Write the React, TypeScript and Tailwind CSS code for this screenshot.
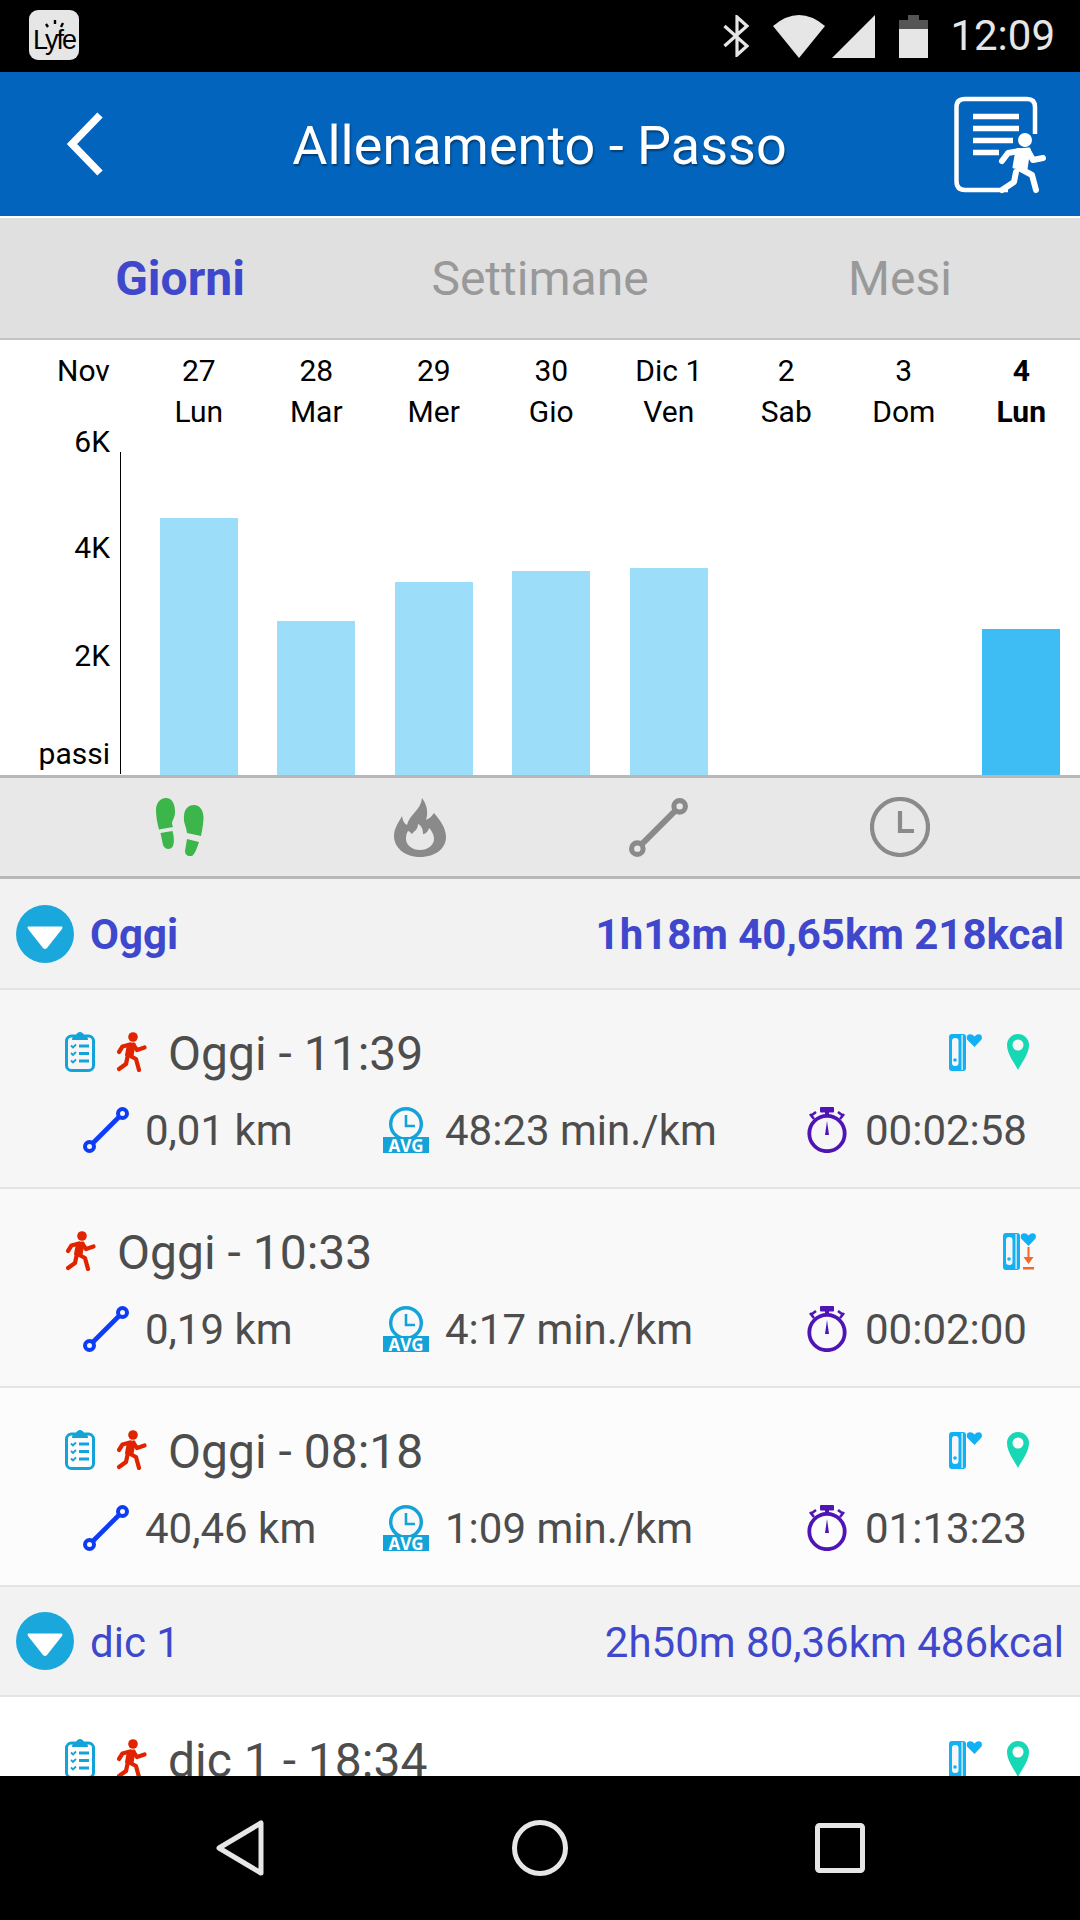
import React from 'react';

const days = [
  { top: '27', bottom: 'Lun', bar: 257 },
  { top: '28', bottom: 'Mar', bar: 154 },
  { top: '29', bottom: 'Mer', bar: 193 },
  { top: '30', bottom: 'Gio', bar: 204 },
  { top: 'Dic 1', bottom: 'Ven', bar: 207 },
  { top: '2', bottom: 'Sab', bar: 0 },
  { top: '3', bottom: 'Dom', bar: 0 },
  { top: '4', bottom: 'Lun', bar: 146, today: true },
];

const Runner = ({ color = '#e02400', className = 'w-[31px] h-[40px]' }: { color?: string; className?: string }) => (
  <svg viewBox="0 0 31 40" className={className}>
    <circle cx="17" cy="5" r="4.800" fill={color} />
    <path d="M12.500 12.500 L18 12 L16 24 L10.500 23 Z" fill={color} stroke={color} strokeWidth="3" strokeLinejoin="round" />
    <g fill="none" stroke={color} strokeWidth="4.200" strokeLinecap="round" strokeLinejoin="round">
      <path d="M14 12.500 L6.500 14.500 L3 20" />
      <path d="M17.500 13 L21 18 L28.500 15.500" />
      <path d="M12.500 23 L20 27 L23 38" />
      <path d="M11.500 25 L10 32 L3 37" />
    </g>
  </svg>
);

const Clipboard = () => (
  <svg viewBox="0 0 30 40" className="w-[30px] h-[40px]">
    <rect x="1.500" y="4" width="27" height="34.500" rx="5" fill="none" stroke="#14a3d9" strokeWidth="3" />
    <path d="M7 8 Q7 4 10.500 4 Q12 0 15 0 Q18 0 19.500 4 Q23 4 23 8 Z" fill="#14a3d9" />
    <g stroke="#14a3d9" fill="none">
      <path d="M14 14 H24 M14 21.500 H24 M14 29 H24" strokeWidth="3" />
      <path d="M6 13.500 L8 15.500 L11 12.500 M6 21 L8 23 L11 20 M6 28.500 L8 30.500 L11 27.500" strokeWidth="1.800" />
    </g>
  </svg>
);

const Distance = ({ color = '#0d3cf5', width = 4.6, className = 'w-[46px] h-[46px]' }: { color?: string; width?: number; className?: string }) => (
  <svg viewBox="0 0 46 46" className={className}>
    <path d="M10 36 L36 10" stroke={color} strokeWidth={width} />
    <circle cx="6.500" cy="39.500" r="4.500" fill="none" stroke={color} strokeWidth={width - 0.6} />
    <circle cx="39.500" cy="6.500" r="4.500" fill="none" stroke={color} strokeWidth={width - 0.6} />
  </svg>
);

const AvgPace = () => (
  <div className="relative w-[46px] h-[46px]">
    <svg viewBox="0 0 46 46" className="w-[46px] h-[46px]">
      <circle cx="23" cy="17" r="15.300" fill="#f8f8f8" stroke="#14a3d9" strokeWidth="3.400" />
      <path d="M23 8 V19 H32" fill="none" stroke="#14a3d9" strokeWidth="2.600" />
      <rect x="0" y="30" width="46" height="16" fill="#14a3d9" />
    </svg>
    <span className="absolute left-0 right-0 bottom-0 h-[16px] text-center text-white text-[17px] leading-[17px] font-bold font-['Open_Sans']">AVG</span>
  </div>
);

const Stopwatch = () => (
  <svg viewBox="0 0 40 46" className="w-[40px] h-[46px]">
    <circle cx="20" cy="26.500" r="17.700" fill="none" stroke="#4f14b4" strokeWidth="3.800" />
    <rect x="13" y="0" width="14" height="5.500" rx="1" fill="#4f14b4" />
    <rect x="18" y="4" width="4" height="6" fill="#4f14b4" />
    <path d="M5 8 L9 5 M35 8 L31 5 M3 7 L7 12 M37 7 L33 12" stroke="#4f14b4" strokeWidth="2.600" />
    <path d="M20 14 L22 28 H18 Z" fill="#4f14b4" />
  </svg>
);

const Band = ({ download }: { download?: boolean }) => (
  <svg viewBox="0 0 33 37" className="w-[33px] h-[37px]">
    <rect x="0" y="0" width="17" height="37" rx="3" fill="#12b0f5" />
    <rect x="3" y="4" width="6.500" height="28" rx="3" fill="#f7f7f7" />
    <rect x="12.500" y="1" width="1.200" height="35" fill="#f7f7f7" />
    <circle cx="6" cy="26" r="1.800" fill="#12b0f5" />
    <path d="M25.500 13 L18 5.500 Q17 1 20.500 0.300 Q23.500 0 25.500 2.500 Q27.500 0 30.500 0.300 Q34 1 32.500 5.500 Z" fill="#12b0f5" />
    {download && (
      <g fill="#f4662a">
        <rect x="24.500" y="14" width="2" height="12" />
        <path d="M20.500 24 H30.500 L25.500 31 Z" />
        <rect x="20" y="34" width="11" height="2.500" />
      </g>
    )}
  </svg>
);

const Pin = () => (
  <svg viewBox="0 0 22 36" className="w-[22px] h-[36px]">
    <path fillRule="evenodd" d="M11 36 C7 28 0 20 0 11 A11 11 0 0 1 22 11 C22 20 15 28 11 36 Z M11 5.500 A5.500 5.500 0 1 0 11 16.500 A5.500 5.500 0 1 0 11 5.500 Z" fill="#17d8b4" />
  </svg>
);

const GroupHeader = ({ label, summary, bold, height }: { label: string; summary: string; bold?: boolean; height: string }) => (
  <div className={`flex items-center justify-between bg-[#f2f2f2] border-b-2 border-[#e4e4e4] pl-[16px] pr-[16px] text-[42px] text-[#3f48cc] ${height} ${bold ? 'font-bold' : ''}`}>
    <div className="flex items-center gap-[16px]">
      <svg viewBox="0 0 58 58" className="w-[58px] h-[58px]">
        <circle cx="29" cy="29" r="29" fill="#1aa7dc" />
        <path d="M12 21.500 H46 Q47 22 46 24 L31 43 Q29 45 27 43 L12 24 Q11 22 12 21.500 Z" fill="#fff" />
      </svg>
      <span className="mt-[2px]">{label}</span>
    </div>
    <span className="mt-[2px]">{summary}</span>
  </div>
);

const Workout = ({ title, dist, pace, time, plan, gps, download, bg }: {
  title: string; dist?: string; pace?: string; time?: string; plan?: boolean; gps?: boolean; download?: boolean; bg: string;
}) => (
  <div className={`h-[199px] border-b-2 border-[#e4e4e4] pt-[42px] pl-[65px] pr-[51px] text-[#4d4d4d] ${bg}`}>
    <div className="flex items-center h-[40px]">
      {plan && <div className="mr-[21px] flex"><Clipboard /></div>}
      <Runner />
      <span className="ml-[21px] mt-[3px] text-[48px] leading-[44px]">{title}</span>
      <div className={`ml-auto flex items-center gap-[25px] ${download ? '-mr-[7px]' : ''}`}>
        <Band download={download} />
        {gps && <Pin />}
      </div>
    </div>
    {dist && (
      <div className="grid grid-cols-[300px_424px_1fr] mt-[33px] ml-[18px] text-[42px] leading-[46px]">
        <div className="flex items-center gap-[16px]"><Distance /><span className="mt-[3px]">{dist}</span></div>
        <div className="flex items-center gap-[16px]"><AvgPace /><span className="mt-[3px]">{pace}</span></div>
        <div className="flex items-center gap-[18px]"><Stopwatch /><span className="mt-[3px]">{time}</span></div>
      </div>
    )}
  </div>
);

export default function App() {
  return (
    <div className="w-[1080px] h-[1920px] flex flex-col overflow-hidden bg-white font-['Roboto',sans-serif]">
      {/* status bar */}
      <div className="h-[72px] shrink-0 bg-black flex items-center pl-[29px] pr-[25px] text-[#e6e6e6]">
        <div className="relative w-[50px] h-[50px] -mt-[2px] rounded-[9px] bg-[#e6e6e6] text-black text-[27px] leading-[26px] text-center font-['Liberation_Sans'] tracking-[-2px] pt-[17px]">
          Lyfe
          <svg viewBox="0 0 50 50" className="absolute inset-0 w-[50px] h-[50px]">
            <path d="M17 14 L19 17 M26 10 V14 M34 13 L32 17" stroke="#000" strokeWidth="2.400" />
          </svg>
        </div>
        <div className="ml-auto flex items-center">
          <svg viewBox="0 0 28 42" className="w-[28px] h-[42px]">
            <path d="M1.500 11 L24 31 L14 40 V2 L24 11 L1.500 31" fill="none" stroke="#e6e6e6" strokeWidth="3.200" />
          </svg>
          <svg viewBox="0 0 52 43" className="w-[52px] h-[43px] ml-[22px]">
            <path d="M26 43 L0 11 Q26 -11 52 11 Z" fill="#e6e6e6" />
          </svg>
          <svg viewBox="0 0 43 43" className="w-[43px] h-[43px] ml-[7px]">
            <path d="M43 0 V43 H0 Z" fill="#e6e6e6" />
          </svg>
          <svg viewBox="0 0 29 43" className="w-[29px] h-[43px] ml-[24px]">
            <path d="M0 5 H9 V0 H20 V5 H29 V14 H0 Z" fill="#555" />
            <rect x="0" y="14" width="29" height="29" fill="#e6e6e6" />
          </svg>
          <span className="ml-[22px] text-[42px] leading-[42px]">12:09</span>
        </div>
      </div>

      {/* app bar */}
      <div className="h-[144px] shrink-0 bg-[#0364bd] flex items-center justify-between pl-[62px] pr-[32px]">
        <svg viewBox="0 0 44 64" className="w-[44px] h-[64px]">
          <path d="M38 3 L10 32 L38 61" fill="none" stroke="#fff" strokeWidth="7.500" />
        </svg>
        <span className="ml-[21px] mt-[3px] text-white text-[54px] [text-shadow:1px_2px_2px_rgba(0,0,0,0.4)]">Allenamento - Passo</span>
        <svg viewBox="0 0 96 100" className="w-[96px] h-[100px]">
          <path d="M56 96 H13 Q4.500 96 4.500 87 V13 Q4.500 5 13 5 H75 Q83 5 83 13 V40" fill="none" stroke="#fff" strokeWidth="4.500" />
          <path d="M21 22.500 H67 M21 34.500 H67 M21 46.500 H61 M21 58.500 H47" stroke="#fff" strokeWidth="5.500" />
          <circle cx="73" cy="46" r="7" fill="#fff" />
          <path d="M65 56 L77 55 L74 75 L62 73 Z" fill="#fff" stroke="#fff" strokeWidth="3" strokeLinejoin="round" />
          <g fill="none" stroke="#fff" strokeWidth="6" strokeLinecap="round" strokeLinejoin="round">
            <path d="M67 57 L56 59 L50 67" />
            <path d="M76 57 L81 66 L91 64" />
            <path d="M67 74 L80 81 L84 96" />
            <path d="M64 78 L62 88 L50 96" />
          </g>
        </svg>
      </div>

      {/* tabs */}
      <div className="h-[124px] shrink-0 grid grid-cols-3 items-center pt-[2px] bg-[#e0e0e0] border-t-2 border-t-white border-b-2 border-b-[#c4c4c4] text-[48px] text-center text-[#999999]">
        <span className="font-bold text-[#3f48cc]">Giorni</span>
        <span>Settimane</span>
        <span>Mesi</span>
      </div>

      {/* chart */}
      <div className="h-[435px] shrink-0 bg-white text-[30px] text-black">
        <div className="grid grid-cols-[140px_repeat(8,1fr)] h-[85px] pt-[10px] leading-[41px] text-center">
          <span className="text-left pl-[57px]">Nov</span>
          {days.map((d) => (
            <div key={d.top} className={d.today ? 'font-bold' : ''}>
              <div>{d.top}</div>
              <div>{d.bottom}</div>
            </div>
          ))}
        </div>
        <div className="flex h-[350px]">
          <div className="w-[120px] flex flex-col items-end pr-[10px] leading-[34px]">
            <span>6K</span>
            <span className="mt-[72px]">4K</span>
            <span className="mt-[74px]">2K</span>
            <span className="mt-[64px]">passi</span>
          </div>
          <div className="w-[1px] bg-black mt-[27px] mb-[1px]" />
          <div className="flex-1 ml-[19px] grid grid-cols-8 items-end">
            {days.map((d) => (
              <div
                key={d.top}
                className={`w-[78px] mx-auto ${d.today ? 'bg-[#3ebcf4]' : 'bg-[#9cddfa]'}`}
                style={{ height: d.bar }}
              />
            ))}
          </div>
        </div>
      </div>

      {/* metric selector */}
      <div className="h-[104px] shrink-0 bg-[#e8e8e8] border-y-[3px] border-[#b8b8b8] px-[60px] grid grid-cols-4 items-center justify-items-center">
        <svg viewBox="0 0 48 58" className="w-[48px] h-[58px]">
          <path d="M10 0 C16 0 19 6 19 14 C19 20 16 22 16 26 L17 29 L3 31.500 C1 24 0 18 0 12 C0 5 4 0 10 0 Z" fill="#3cb54a" />
          <path d="M4.500 35 L16.500 33 C18 38 18.500 44 17 48 C15 52 9 52 7 47 Z" fill="#3cb54a" />
          <path d="M38 7 C44 7 48 13 47.500 21 C47 28 46 33 45 38 L31 35 L30 30 C29 26 27.500 24 28 18 C28.500 11 32 7 38 7 Z" fill="#3cb54a" />
          <path d="M31 41 L43 44 C41 50 39 56 36 58 C32 59 29 57 29 53 Z" fill="#3cb54a" />
        </svg>
        <svg viewBox="0 0 52 59" className="w-[52px] h-[59px]">
          <path fillRule="evenodd" d="M26 59 C10 59 0 49 0 38 C0 30 5 24 8 18 C9 24 11 26 13 27 C15 17 27 12 28 0 C34 8 34 16 32 22 C36 20 38 18 40 15 C46 22 52 30 52 39 C52 50 42 59 26 59 Z M26 52 C34 52 40 47 40 41 C40 36 37 32 35 30 C34 34 31 36 29 36 C29 32 28 28 24 26 C24 32 20 33 18 36 C16 34 15 33 14 33 C12 36 12 39 12 41 C12 47 18 52 26 52 Z" fill="#8a8a8a" />
        </svg>
        <div className="-ml-[3px]"><Distance color="#8a8a8a" width={4.600} className="w-[59px] h-[59px]" /></div>
        <svg viewBox="0 0 60 60" className="w-[60px] h-[60px]">
          <circle cx="30" cy="30" r="28" fill="none" stroke="#8a8a8a" strokeWidth="4.200" />
          <path d="M30 14 V34 H44" fill="none" stroke="#8a8a8a" strokeWidth="4.200" />
        </svg>
      </div>

      {/* list */}
      <div className="flex-1 min-h-0 overflow-hidden">
        <GroupHeader label="Oggi" summary="1h18m 40,65km 218kcal" bold height="h-[111px]" />
        <Workout title="Oggi - 11:39" dist="0,01 km" pace="48:23 min./km" time="00:02:58" plan gps bg="bg-[#f6f6f6]" />
        <Workout title="Oggi - 10:33" dist="0,19 km" pace="4:17 min./km" time="00:02:00" download bg="bg-[#f9f9f9]" />
        <Workout title="Oggi - 08:18" dist="40,46 km" pace="1:09 min./km" time="01:13:23" plan gps bg="bg-[#fcfcfc]" />
        <GroupHeader label="dic 1" summary="2h50m 80,36km 486kcal" height="h-[110px]" />
        <Workout title="dic 1 - 18:34" plan gps bg="bg-white" />
      </div>

      {/* nav bar */}
      <div className="h-[144px] shrink-0 bg-black px-[90px] grid grid-cols-3 items-center justify-items-center">
        <svg viewBox="0 0 48 56" className="w-[48px] h-[56px]">
          <path d="M45 3 V53 L3 28 Z" fill="none" stroke="#e6e6e6" strokeWidth="5" strokeLinejoin="round" />
        </svg>
        <svg viewBox="0 0 56 56" className="w-[56px] h-[56px]">
          <circle cx="28" cy="28" r="25.500" fill="none" stroke="#e6e6e6" strokeWidth="5" />
        </svg>
        <svg viewBox="0 0 50 50" className="w-[50px] h-[50px]">
          <rect x="2.500" y="2.500" width="45" height="45" rx="2" fill="none" stroke="#e6e6e6" strokeWidth="5" />
        </svg>
      </div>
    </div>
  );
}
